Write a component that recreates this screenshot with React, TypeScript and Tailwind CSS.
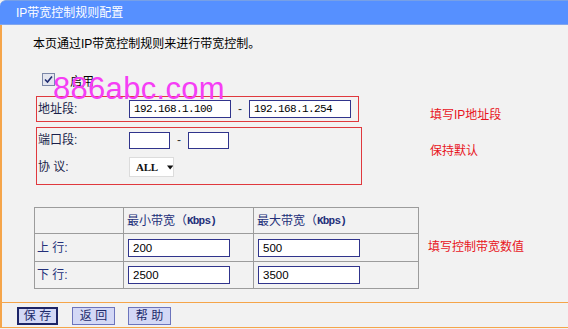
import React from "react";

const Box = ({ w, h, text, mono }: { w: number; h: number; text?: string; mono?: boolean }) => (
  <div
    className={
      "flex items-center bg-white border border-[#30348c] pl-[4px] text-black " +
      (mono
        ? "font-['Liberation_Mono',monospace] text-[11px] tracking-[-0.6px]"
        : "font-['Liberation_Sans',sans-serif] text-[11.5px]")
    }
    style={{ width: w, height: h }}
  >
    {text}
  </div>
);

export default function App() {
  return (
    <div className="relative w-[568px] h-[329px] overflow-hidden bg-[#f2f2f2] text-[12px] leading-[16px] text-black font-['Liberation_Sans','Noto_Sans_CJK_SC',sans-serif]">
      {/* title bar */}
      <div className="h-[25px] bg-[#5690ff] rounded-tl-[6px] border-t border-t-[#77a0e6] border-b border-b-[#82a6ec] flex items-center pl-[16px] text-white">
        IP带宽控制规则配置
      </div>

      <div className="border-l-2 border-[#f5a54a] h-[303px] flex flex-col">
        <div className="h-[277px] flex flex-col">
          <div className="pl-[31px] pt-[11px]">本页通过IP带宽控制规则来进行带宽控制。</div>

          {/* enable checkbox */}
          <div className="mt-[21px] pl-[40px] flex items-start h-[16px]">
            <div className="w-[13px] h-[13px] border border-[#7c88a8] bg-[#e4e6ef] flex items-center justify-center">
              <svg width="9" height="9" viewBox="0 0 9 9">
                <path d="M1 4.5 L3.5 7 L8 1.5" stroke="#1f2c70" strokeWidth="1.6" fill="none" />
              </svg>
            </div>
            <span className="ml-[15px] mt-[1px]">启用</span>
          </div>

          {/* form area */}
          <div className="mt-[7px] pl-[34px] flex">
            <div className="w-[326px] flex flex-col">
              <div className="w-[323px] h-[26px] border border-[#e0393e] flex items-center">
                <span className="w-[92px] pl-[1px] text-[#1a1f4a]">地址段:</span>
                <Box w={102} h={18} text="192.168.1.100" mono />
                <span className="w-[18px] text-center text-[#333]">-</span>
                <Box w={102} h={18} text="192.168.1.254" mono />
              </div>
              <div className="mt-[5px] w-[326px] h-[58px] border border-[#e0393e] flex flex-col">
                <div className="h-[24px] flex items-center">
                  <span className="w-[92px] pl-[1px] text-[#1a1f4a]">端口段:</span>
                  <Box w={41} h={17} />
                  <span className="w-[18px] text-center text-[#333]">-</span>
                  <Box w={41} h={17} />
                </div>
                <div className="h-[30px] flex items-center">
                  <span className="w-[92px] pl-[1px] text-[#1a1f4a]">协 议:</span>
                  <div className="w-[45px] h-[20px] bg-white border border-[#dcdcdc] flex items-center pl-[6px]">
                    <span className="font-['Liberation_Serif',serif] font-bold text-[11px] tracking-[-0.3px] text-[#111]">ALL</span>
                    <svg className="ml-[9px]" width="8" height="5" viewBox="0 0 8 5">
                      <path d="M0 0 L8 0 L4 5 Z" fill="#111" />
                    </svg>
                  </div>
                </div>
              </div>
            </div>
            <div className="ml-[68px] pt-[11px] flex flex-col text-[#e8141c]">
              <span>填写IP地址段</span>
              <span className="mt-[20px]">保持默认</span>
            </div>
          </div>

          {/* bandwidth table */}
          <div className="mt-[22px] pl-[32px] flex">
            <div className="grid grid-cols-[89px_130px_165px] grid-rows-[26px_28px_27px] border-l border-t border-[#9c9c9c] text-[#24307a]">
              <div className="border-r border-b border-[#9c9c9c]" />
              <div className="border-r border-b border-[#9c9c9c] flex items-center pl-[3px]">
                最小带宽（<span className="font-['Liberation_Mono',monospace] font-bold text-[11px] tracking-[-0.8px]">Kbps)</span>
              </div>
              <div className="border-r border-b border-[#9c9c9c] flex items-center pl-[3px]">
                最大带宽（<span className="font-['Liberation_Mono',monospace] font-bold text-[11px] tracking-[-0.8px]">Kbps)</span>
              </div>

              <div className="border-r border-b border-[#9c9c9c] flex items-center pl-[2px]">上 行:</div>
              <div className="border-r border-b border-[#9c9c9c] flex items-center pl-[4px]">
                <Box w={102} h={18} text="200" />
              </div>
              <div className="border-r border-b border-[#9c9c9c] flex items-center pl-[4px]">
                <Box w={102} h={18} text="500" />
              </div>

              <div className="border-r border-b border-[#9c9c9c] flex items-center pl-[2px]">下 行:</div>
              <div className="border-r border-b border-[#9c9c9c] flex items-center pl-[4px]">
                <Box w={102} h={18} text="2500" />
              </div>
              <div className="border-r border-b border-[#9c9c9c] flex items-center pl-[4px]">
                <Box w={102} h={18} text="3500" />
              </div>
            </div>
            <span className="ml-[9px] mt-[32px] text-[#e8141c] h-[16px]">填写控制带宽数值</span>
          </div>
        </div>

        {/* footer */}
        <div className="h-[26px] border-t border-b border-[#f5a54a] flex items-start pt-[4px] pl-[15px] text-[#1c2a6a]">
          <div className="w-[41px] h-[18px] border-2 border-[#1c2466] bg-[#d3d8f6] flex items-center justify-center">保 存</div>
          <div className="ml-[14px] w-[43px] h-[18px] border border-[#6c74bc] bg-[#d3d8f6] flex items-center justify-center">返 回</div>
          <div className="ml-[13px] w-[43px] h-[18px] border border-[#6c74bc] bg-[#d3d8f6] flex items-center justify-center">帮 助</div>
        </div>
      </div>

      {/* watermark */}
      <div className="absolute left-[53px] top-[73px] text-[31px] leading-[31px] tracking-[0.3px] text-[#f53ef5] font-['Liberation_Sans',sans-serif] pointer-events-none">
        886abc.com
      </div>
    </div>
  );
}
